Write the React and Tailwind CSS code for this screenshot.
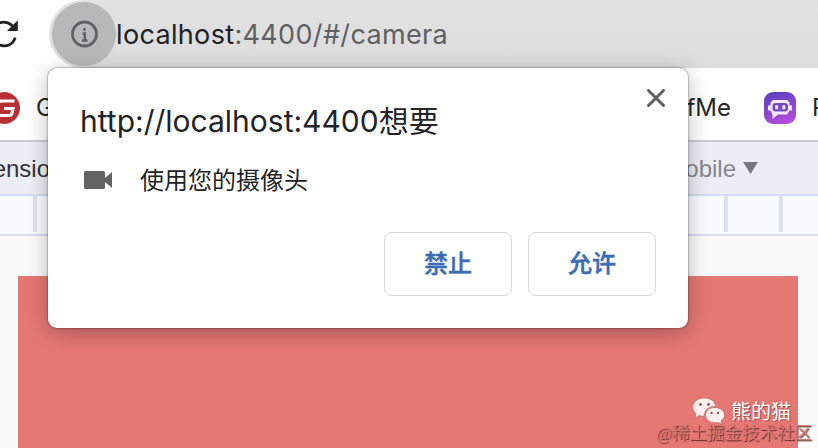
const ui = "font-['Inter','Noto_Sans_CJK_SC',sans-serif]";

function AddressBar() {
  return (
    <div className="flex h-[68px] shrink-0 items-center">
      <svg className="h-9 w-[19px] shrink-0" viewBox="0 0 19 36" fill="none">
        <path d="M-1 28.500C6 32 13 28.500 15.200 21.600M-1 7.300C4 4.800 10.500 6.500 14 12" stroke="#202124" strokeWidth="2.800" />
        <path d="M17.800 4.200V15H7Z" fill="#202124" />
      </svg>
      <div className="ml-[30px] flex h-[68px] flex-1 items-center rounded-l-[34px] bg-linear-to-b from-[#e2e2e2] to-[#dcdcdc] pl-[3px]">
        <div className="flex size-16 shrink-0 items-center justify-center rounded-full bg-[#b7b8b8]">
          <svg className="size-7" viewBox="0 0 28 28" fill="none">
            <circle cx="14.500" cy="14" r="12" stroke="#5f6265" strokeWidth="2.800" />
            <path d="M12.500 13.500H14.800V20.500M12 20.500H17.500M14.500 8V10.700" stroke="#5f6265" strokeWidth="2.400" />
          </svg>
        </div>
        <div className="whitespace-nowrap text-[27px] leading-none tracking-[0.34px] text-[#5f6062]">
          <span className="text-[#202124]">localhost</span>:4400/#/camera
        </div>
      </div>
    </div>
  );
}

function Bookmarks() {
  return (
    <div className="flex h-[72px] shrink-0 items-center overflow-hidden bg-white pt-2 text-[24px] text-[#252629]">
      <div className="-ml-3 size-8 shrink-0 rounded-full bg-[#b93032]">
        <svg className="size-8" viewBox="0 0 32 32" fill="none">
          <path d="M26.500 9H14Q9.500 9 9.500 13V19Q9.500 23.500 13 23.500H21.500Q23.500 23.500 24 21L25 16.500H16" stroke="white" strokeWidth="3.200" />
        </svg>
      </div>
      <span className="ml-4">G</span>
      <span className="ml-auto whitespace-nowrap">SelfMe</span>
      <svg className="ml-[33px] size-8 shrink-0" viewBox="0 0 32 32">
        <defs>
          <linearGradient id="bot" x1="0.200" y1="0" x2="0.600" y2="1">
            <stop stopColor="#5941bd" />
            <stop offset="1" stopColor="#b54bdc" />
          </linearGradient>
        </defs>
        <rect width="32" height="32" rx="9" fill="url(#bot)" />
        <path d="M9 8H23L25.500 10.500V13.500H28V18.500H25.500L23 22.500H14L8.500 27V22.500L6.500 18.500H4V13.500H6.500V10.500Z" fill="#f3e8ff" />
        <rect x="8.500" y="11" width="15.500" height="8.500" rx="3" fill="#754bc2" />
        <path d="M12.600 13.300V17.300M19.800 13.300V17.300" stroke="#f3e8ff" strokeWidth="2.800" />
      </svg>
      <span className="ml-4 w-1.5 whitespace-nowrap">P</span>
    </div>
  );
}

function DeviceToolbar() {
  return (
    <div className="flex h-14 shrink-0 items-center border-y-2 border-t-[#cccccf] border-b-[#d6dbef] bg-[#edeef5] text-[24px] text-[#303136] font-['Liberation_Sans',sans-serif]">
      <span className="flex w-[50px] justify-end whitespace-nowrap pt-0.5">Dimensio</span>
      <span className="ml-auto pt-0.5 text-[#85868d]">Mobile</span>
      <svg className="mr-[60px] ml-[7px] h-3 w-[15px]" viewBox="0 0 15 12"><path d="M0 0H15L7.500 12Z" fill="#77787e" /></svg>
    </div>
  );
}

function Ruler() {
  return (
    <div className="flex h-10 shrink-0 justify-between border-b-2 border-[#d9dff0] bg-[#f8fbff] pb-0.5">
      <div className="w-[37px] border-r-4 border-[#dbe1f4]" />
      <div className="flex w-[94px]">
        <div className="w-[55px] border-l-4 border-[#dbe1f4]" />
        <div className="flex-1 border-l-4 border-[#dbe1f4]" />
      </div>
    </div>
  );
}

function PermissionDialog() {
  const button = "flex h-16 w-32 items-center justify-center rounded-[7px] border border-[#d8dadd] text-[24px] font-medium text-[#3b6db5] [-webkit-text-stroke:0.5px]";
  return (
    <div role="dialog" className="absolute top-[68px] left-12 flex h-[260px] w-[640px] flex-col rounded-[9px] bg-white px-8 pt-[35px] pb-8 text-[#222326] shadow-[0_0_2px_rgba(0,0,0,0.65),0_5px_22px_rgba(0,0,0,0.28)]">
      <div className="flex justify-between">
        <h1 className="whitespace-nowrap text-[30px] leading-[37px]">http://localhost:4400想要</h1>
        <svg className="-mt-[14px] -mr-[9px] size-[18px]" viewBox="0 0 18 18"><path d="M1.500 1.500L16.500 16.500M16.500 1.500L1.500 16.500" stroke="#5f6062" strokeWidth="3" strokeLinecap="round" /></svg>
      </div>
      <div className="mt-[22px] flex h-9 items-center">
        <svg className="ml-1 h-[18px] w-7" viewBox="0 0 28 18"><path d="M1.500 0H19.500Q21 0 21 1.500V7L28 1V17L21 11V16.500Q21 18 19.500 18H1.500Q0 18 0 16.500V1.500Q0 0 1.500 0Z" fill="#626464" /></svg>
        <span className="ml-7 pt-0.5 text-[24px] leading-none">使用您的摄像头</span>
      </div>
      <div className="mt-auto flex justify-end gap-4">
        <button className={button}>禁止</button>
        <button className={button}>允许</button>
      </div>
    </div>
  );
}

function Watermark() {
  return (
    <div className="absolute right-[6px] bottom-0 flex flex-col items-end whitespace-nowrap">
      <div className="mr-[21px] flex h-[27px] items-center text-[20px] leading-none text-white [text-shadow:1px_1px_1px_#944b48]">
        <svg className="mr-1.5 h-[27px] w-8" viewBox="0 0 32 27" fill="#fff0ee">
          <path d="M11.500 0C18 0 22.500 4 22.500 8.500C15 8.500 11 12.500 11.500 18Q8.500 18.500 6 17.500L2 20L3 15.500C-4 10 1 0 11.500 0Z" stroke="#b65b57" strokeWidth="0.600" />
          <path d="M22 9.500C28 9.500 31.500 13.500 31.500 17C31.500 19.500 30 21.500 28 23L29 26.500L25 24.500C18 26 12.500 22 12.500 17C12.500 13 16.500 9.500 22 9.500Z" stroke="#b65b57" strokeWidth="0.600" />
          <g fill="#9d5350"><circle cx="7.500" cy="6.500" r="1.400" /><circle cx="15.500" cy="6.500" r="1.400" /><circle cx="18.500" cy="15" r="1.200" /><circle cx="25" cy="15" r="1.200" /></g>
        </svg>
        熊的猫
      </div>
      <div className="h-[23px] text-[17.500px] leading-[17px] text-[#d57773] font-['Liberation_Serif','Noto_Sans_CJK_SC',serif] [text-shadow:1px_1px_1px_#622f2d]">@稀土掘金技术社区</div>
    </div>
  );
}

export default function App() {
  return (
    <main className={`relative flex h-[448px] w-[818px] flex-col overflow-hidden bg-white ${ui}`}>
      <AddressBar />
      <Bookmarks />
      <DeviceToolbar />
      <Ruler />
      <div className="flex-1 bg-[#fbfbfb] pt-10 pr-5 pl-[18px]">
        <div className="h-full bg-[#e67874]" />
      </div>
      <PermissionDialog />
      <Watermark />
    </main>
  );
}
